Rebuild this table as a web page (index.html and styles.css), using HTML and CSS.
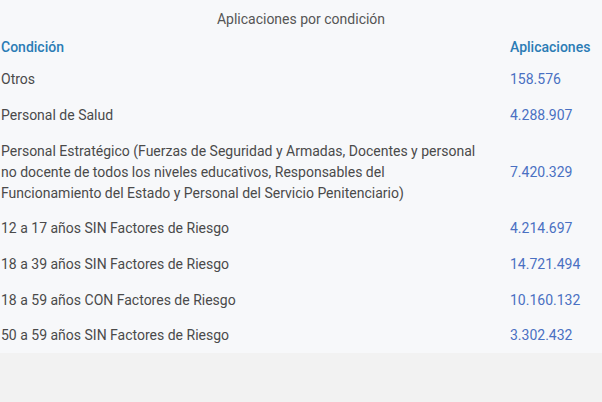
FILE: index.html
```html
<!DOCTYPE html>
<html lang="es">
<head>
<meta charset="utf-8">
<title>Aplicaciones por condición</title>
<link rel="stylesheet" href="styles.css">
</head>
<body>
<div class="panel">
  <div class="title">Aplicaciones por condición</div>
  <table class="data">
    <colgroup><col class="c1"><col class="c2"></colgroup>
    <thead>
      <tr><th>Condición</th><th>Aplicaciones</th></tr>
    </thead>
    <tbody>
      <tr><td>Otros</td><td class="num">158.576</td></tr>
      <tr><td>Personal de Salud</td><td class="num">4.288.907</td></tr>
      <tr><td>Personal Estratégico (Fuerzas de Seguridad y Armadas, Docentes y personal no docente de todos los niveles educativos, Responsables del Funcionamiento del Estado y Personal del Servicio Penitenciario)</td><td class="num">7.420.329</td></tr>
      <tr><td>12 a 17 años SIN Factores de Riesgo</td><td class="num">4.214.697</td></tr>
      <tr><td>18 a 39 años SIN Factores de Riesgo</td><td class="num">14.721.494</td></tr>
      <tr><td>18 a 59 años CON Factores de Riesgo</td><td class="num">10.160.132</td></tr>
      <tr><td>50 a 59 años SIN Factores de Riesgo</td><td class="num">3.302.432</td></tr>
    </tbody>
  </table>
</div>
</body>
</html>
```
FILE: styles.css
```css
html, body {
  margin: 0;
  padding: 0;
  background: #f2f2f2;
  font-family: Roboto, "Liberation Sans", sans-serif;
  font-size: 14px;
}
.panel {
  background: #f7f8fa;
  width: 602px;
}
.title {
  text-align: center;
  color: #555555;
  line-height: 21px;
  padding-top: 9px;
  height: 22px;
}
.data {
  width: 602px;
  table-layout: fixed;
  border-collapse: collapse;
  border-spacing: 0;
}
.c1 { width: 509px; }
.c2 { width: 93px; }
.data th {
  text-align: left;
  font-weight: 500;
  color: #2b7cb5;
  line-height: 21px;
  padding: 5.5px 1px 3.5px 1px;
}
.data td {
  color: #4a4a4a;
  line-height: 21px;
  padding: 8.33px 24px 6.33px 1px;
  vertical-align: middle;
}
.data td.num {
  color: #4a70c2;
  padding-right: 1px;
}
```
